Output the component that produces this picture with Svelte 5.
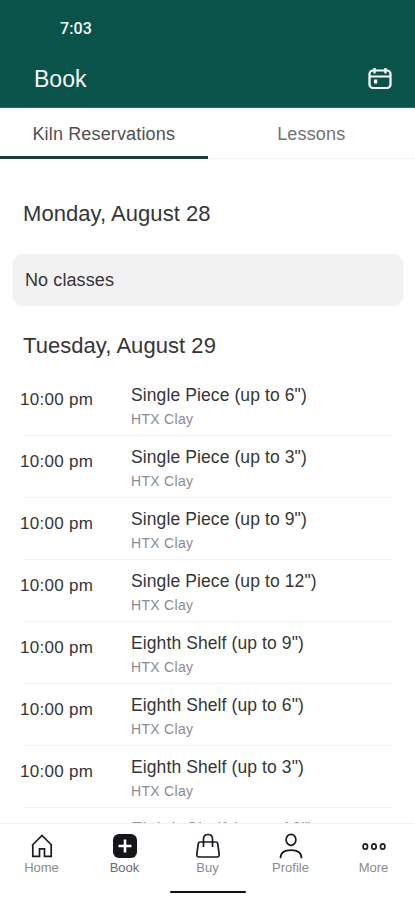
<script>
  let activeTab = "Kiln Reservations";
  let activePage = "Book";

  const tabs = ["Kiln Reservations", "Lessons"];
  const pages = ["Home", "Book", "Buy", "Profile", "More"];

  const classes = [
    'Single Piece (up to 6")',
    'Single Piece (up to 3")',
    'Single Piece (up to 9")',
    'Single Piece (up to 12")',
    'Eighth Shelf (up to 9")',
    'Eighth Shelf (up to 6")',
    'Eighth Shelf (up to 3")',
    'Eighth Shelf (up to 12")'
  ].map((name, id) => ({ id, name, time: "10:00 pm", studio: "HTX Clay" }));
</script>

<div class="app">
  <header>
    <div class="clock">7:03</div>
    <div class="titlebar">
      <h1>Book</h1>
      <button class="calendar" aria-label="Calendar">
        <svg width="26" height="24" viewBox="0 0 26 24" fill="none" stroke="#fff" stroke-width="2.2">
          <rect x="2.5" y="3.500" width="21" height="17.500" rx="3.500" />
          <path d="M3 9.500h20M7.500 1v5.500M18.500 1v5.500" />
          <rect x="7" y="12.500" width="3.200" height="4" fill="#fff" stroke="none" />
        </svg>
      </button>
    </div>
  </header>

  <div class="tabs">
    {#each tabs as tab}
      <button class:active={activeTab === tab} on:click={() => (activeTab = tab)}>
        {tab}
      </button>
    {/each}
  </div>

  <main>
    <h2>Monday, August 28</h2>
    <div class="empty">No classes</div>

    <h2 class="second">Tuesday, August 29</h2>
    {#each classes as item (item.id)}
      <div class="row">
        <span class="time">{item.time}</span>
        <div>
          <div class="name">{item.name}</div>
          <div class="studio">{item.studio}</div>
        </div>
      </div>
    {/each}
  </main>

  <nav>
    {#each pages as page}
      <button class:current={activePage === page} on:click={() => (activePage = page)}>
        <svg width="28" height="28" viewBox="0 0 28 28" fill="none" stroke="#1b1b25" stroke-width="1.7">
          {#if page === "Home"}
            <path d="M4 13.500 14 3.500l10 10M4.800 12.800V24.300h6.700v-7.500h5v7.500h6.700V12.800" />
          {:else if page === "Book"}
            <rect x="2" y="2" width="24" height="24" rx="6" fill="#15151a" stroke="none" />
            <path d="M14 7.500v13M7.500 14h13" stroke="#fff" stroke-width="2.6" />
          {:else if page === "Buy"}
            <path d="M6 10h16q1.500 0 1.700 1.300l1.500 11q.2 2.700-2.200 2.700H5q-2.400 0-2.200-2.700l1.500-11Q4.500 10 6 10z" />
            <path d="M9.500 15V7q0-4.500 4.500-4.500T18.500 7v8" />
          {:else if page === "Profile"}
            <ellipse cx="14" cy="7.800" rx="4.900" ry="5.500" />
            <path d="M3.500 26.200q0-8 10.500-8t10.500 8" />
          {:else}
            <ellipse cx="5.300" cy="14.500" rx="2.200" ry="2.700" />
            <ellipse cx="14" cy="14.500" rx="2.200" ry="2.700" />
            <ellipse cx="22.700" cy="14.500" rx="2.200" ry="2.700" />
          {/if}
        </svg>
        <span>{page}</span>
      </button>
    {/each}
  </nav>
  <div class="handle"></div>
</div>

<style>
  :global(body) { background: #fff; }

  .app {
    width: 415px;
    height: 900px;
    display: flex;
    flex-direction: column;
    overflow: hidden;
    background: #fff;
    color: #353537;
    font-family: "Liberation Sans", Arial, sans-serif;
  }

  button {
    padding: 0;
    border: 0;
    background: none;
    font-family: inherit;
    cursor: pointer;
  }

  h1, h2 {
    margin: 0;
    font-weight: normal;
  }

  header {
    flex: none;
    box-sizing: border-box;
    height: 108px;
    padding: 19px 22px 0 34px;
    background: #09534b;
    color: #f4f8f7;
    border-bottom: 1px solid #34645e;
  }

  .clock {
    padding-left: 26px;
    font: 500 16px/20px Roboto, sans-serif;
    letter-spacing: 0.1px;
  }

  .titlebar {
    display: flex;
    align-items: center;
    justify-content: space-between;
    height: 30px;
    margin-top: 25px;
  }

  h1 {
    font-size: 23px;
    line-height: 30px;
  }

  .calendar, .calendar svg { display: block; }

  .tabs {
    flex: none;
    display: flex;
    height: 51px;
  }

  .tabs button {
    flex: 1;
    padding-top: 3px;
    border-bottom: 1px solid #f3f3f3;
    color: #727274;
    font-size: 18px;
    letter-spacing: 0.15px;
  }

  .tabs button.active {
    padding-top: 5px;
    border-bottom: 3px solid #163f39;
    color: #505052;
  }

  main {
    flex: 1;
    min-height: 0;
    padding: 40px 12px 0 13px;
    overflow: hidden;
  }

  h2 {
    padding-left: 10px;
    font-size: 22px;
    line-height: 30px;
    letter-spacing: 0.05px;
  }

  .empty {
    height: 52px;
    margin-top: 25px;
    padding-left: 12px;
    border-radius: 9px;
    background: #f2f2f2;
    font-size: 18px;
    line-height: 52px;
    letter-spacing: 0.1px;
  }

  .second { margin: 25px 0 13px; }

  .row {
    display: grid;
    grid-template-columns: 108px 1fr;
    box-sizing: border-box;
    height: 62px;
    margin: 0 10px;
    border-bottom: 1px solid #f3f3f3;
    white-space: nowrap;
  }

  .row:last-child { color: #99999b; }

  .time {
    margin-left: -3px;
    padding-top: 15px;
    font-size: 17px;
    line-height: 22px;
    letter-spacing: 0.3px;
  }

  .name {
    padding-top: 10px;
    font-size: 17.5px;
    line-height: 22px;
    letter-spacing: 0.1px;
  }

  .studio {
    padding-top: 4px;
    color: #8b8b8d;
    font-size: 14px;
    line-height: 18px;
    letter-spacing: 0.3px;
  }

  nav {
    flex: none;
    display: flex;
    height: 67px;
    border-top: 1px solid #f1f1f1;
  }

  nav button {
    flex: 1;
    display: flex;
    flex-direction: column;
    align-items: center;
    padding-top: 8px;
    color: #8a8a8c;
    font-size: 13px;
    line-height: 16px;
  }

  nav svg { display: block; }
  nav .current { color: #6a6a6c; }

  .handle {
    flex: none;
    width: 76px;
    height: 2px;
    margin: 0 auto 7px;
    border-radius: 1px;
    background: #111;
  }
</style>
